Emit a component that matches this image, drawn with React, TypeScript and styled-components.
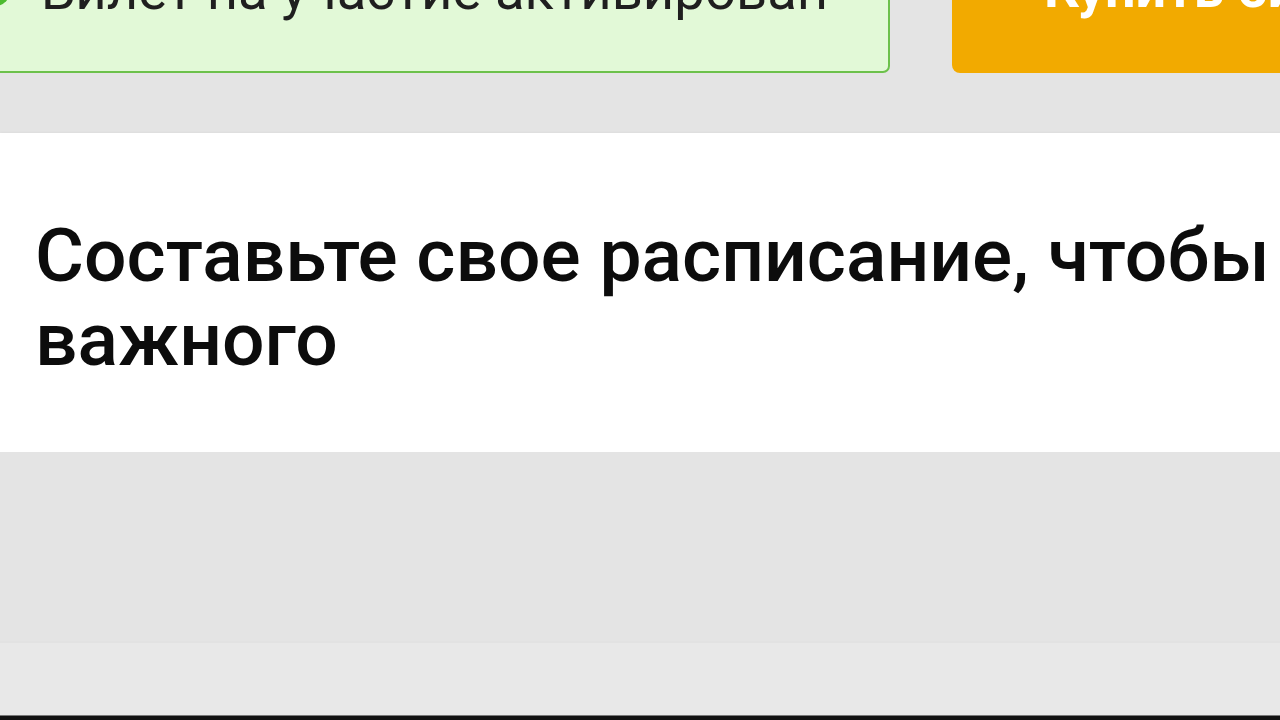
import styled, { createGlobalStyle } from 'styled-components';

const GlobalStyle = createGlobalStyle`
  html, body {
    margin: 0;
    padding: 0;
    background: #e4e4e4;
    overflow: hidden;
  }
  * {
    box-sizing: border-box;
  }
`;

const Screen = styled.div`
  width: 1280px;
  height: 720px;
  overflow: hidden;
  display: flex;
  flex-direction: column;
  background: #e4e4e4;
  font-family: Roboto, 'Liberation Sans', Arial, sans-serif;
`;

const TopRow = styled.div`
  display: flex;
  gap: 62px;
  height: 73px;
  align-items: flex-end;
  margin-left: -40px;
  flex-shrink: 0;
`;

const StatusBox = styled.div`
  flex-shrink: 0;
  width: 930px;
  height: 140px;
  display: flex;
  align-items: flex-end;
  gap: 29px;
  padding: 0 0 54px 10px;
  background: #e2f9d7;
  border: 2px solid #6cc14b;
  border-radius: 7px;
  color: #1f1f1f;
  font-size: 54.5px;
  line-height: 1;
`;

const StatusIcon = styled.span`
  width: 40px;
  height: 40px;
  border-radius: 50%;
  background: #4cbb2f;
  flex-shrink: 0;
  margin-bottom: 10px;
`;

const BuyButton = styled.button`
  flex-shrink: 0;
  width: 700px;
  height: 140px;
  display: flex;
  align-items: flex-end;
  padding: 0 0 57px 92px;
  border: none;
  border-radius: 8px;
  background: #f2aa00;
  color: #ffffff;
  font-family: inherit;
  font-size: 54px;
  font-weight: 700;
  line-height: 1;
`;

const Gap = styled.div<{ $h: number }>`
  height: ${(p) => p.$h}px;
  flex-shrink: 0;
  background: #e4e4e4;
`;

const Card = styled.section`
  flex-shrink: 0;
  height: 319px;
  width: 2200px;
  padding: 80px 0 0 35px;
  background: #ffffff;
  box-shadow: 0 0 3px rgba(0, 0, 0, 0.06);
`;

const Heading = styled.h2`
  margin: 0;
  width: 2100px;
  font-size: 75px;
  font-weight: 500;
  line-height: 84px;
  color: #0c0c0c;
`;

const Footer = styled.div`
  flex: 1;
  background: #e8e8e8;
  border-top: 2px solid #e2e2e2;
`;

const BottomEdge = styled.div`
  height: 5px;
  flex-shrink: 0;
  background: #111111;
  border-top: 1px solid #777777;
`;

export default function App() {
  return (
    <>
      <GlobalStyle />
      <Screen>
        <TopRow>
          <StatusBox>
            <StatusIcon />
            Билет на участие активирован
          </StatusBox>
          <BuyButton>Купить билет</BuyButton>
        </TopRow>
        <Gap $h={60} />
        <Card>
          <Heading>Составьте свое расписание, чтобы не пропустить ничего важного</Heading>
        </Card>
        <Gap $h={189} />
        <Footer />
        <BottomEdge />
      </Screen>
    </>
  );
}
